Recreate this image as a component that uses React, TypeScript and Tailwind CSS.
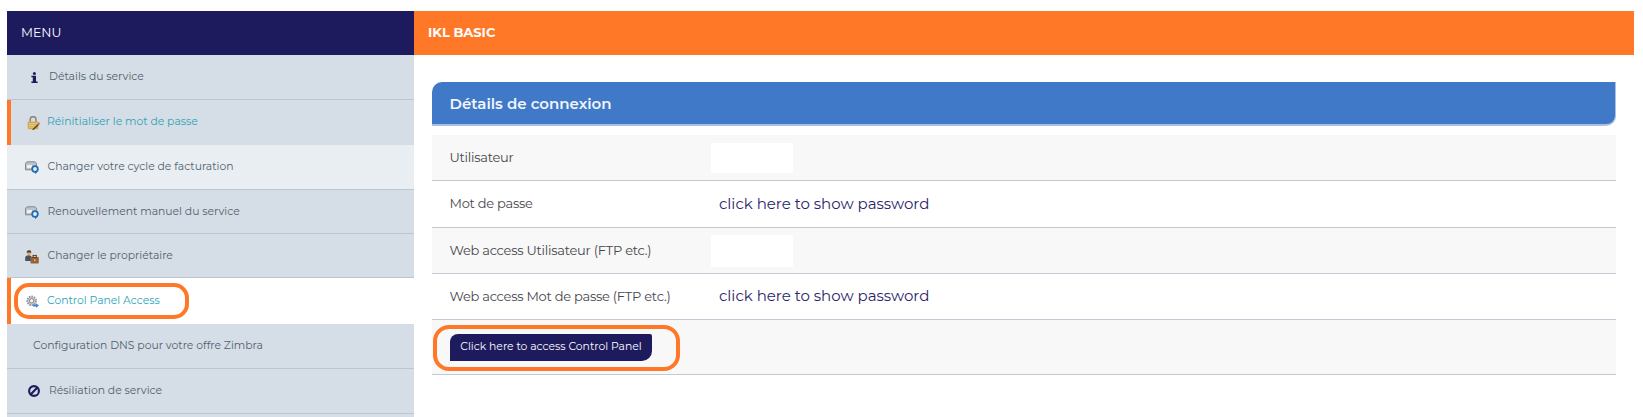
const font = "font-['Montserrat','Inter','Noto_Sans',sans-serif]";

function InfoIcon() {
  return (
    <svg width="7" height="11" viewBox="0 0 7 11" className="block">
      <circle cx="3.4" cy="1.5" r="1.5" fill="#1e1a5e" />
      <path d="M0.4 3.7h4.6v5.7h1.6V11H0.4V9.4h1.4V5.3H0.4z" fill="#1e1a5e" />
    </svg>
  );
}
function BanIcon() {
  return (
    <svg width="12" height="12" viewBox="0 0 12 12" className="block">
      <circle cx="6" cy="6" r="4.9" fill="none" stroke="#1e1a5e" strokeWidth="2.1" />
      <path d="M2.6 9.4 9.4 2.6" stroke="#1e1a5e" strokeWidth="2.1" />
    </svg>
  );
}
function LockIcon() {
  return (
    <svg width="13" height="14" viewBox="0 0 13 14" className="block">
      <path d="M3.2 6V3.6a2.9 2.9 0 0 1 5.8 0V6" fill="none" stroke="#8f8872" strokeWidth="1.5" />
      <rect x="0.7" y="5.6" width="10.6" height="7.6" rx="0.8" fill="#d2aa52" />
      <path d="M2 7.6h8.5M2 9.4h7M2 11.2h5" stroke="#ecd898" strokeWidth="0.7" />
      <path d="M5 13.6l6-5.5 1 1-5.5 4.8z" fill="#5e4520" />
      <circle cx="12" cy="7.6" r="1" fill="#e0566a" />
    </svg>
  );
}
function CycleIcon() {
  return (
    <svg width="14" height="13" viewBox="0 0 14 13" className="block">
      <path d="M0.5 3.2C0.5 1.6 1.5 0.8 3 0.8h6c1.5 0 2.5 .8 2.5 2.4V8.8H0.5z" fill="#c0c2c5" stroke="#84888c" />
      <rect x="2" y="4" width="5" height="3" fill="#eff0f1" />
      <circle cx="10" cy="8" r="2.8" fill="#eaf0f6" stroke="#1f6db8" strokeWidth="1.8" />
      <path d="M10 13v-3l2.2 1.5z" fill="#1f6db8" />
    </svg>
  );
}
function OwnerIcon() {
  return (
    <svg width="14" height="14" viewBox="0 0 14 14" className="block">
      <circle cx="4" cy="2.8" r="2.3" fill="#dca673" />
      <path d="M1.6 2.4a2.4 2.2 0 0 1 4.8 0z" fill="#5a3a20" />
      <path d="M0.2 11V8a3 2.6 0 0 1 6.6 0v3z" fill="#4a525b" />
      <rect x="5.5" y="7" width="8.3" height="6.5" rx="0.7" fill="#9a6230" />
      <rect x="8" y="5.4" width="3.3" height="2" fill="none" stroke="#5c3a1a" />
      <rect x="9" y="9.4" width="1.5" height="1.5" fill="#e8cc80" />
    </svg>
  );
}
function GearIcon() {
  return (
    <svg width="13" height="13" viewBox="0 0 13 13" className="block">
      <circle cx="5.6" cy="5.8" r="4.4" fill="#c9cbce" stroke="#94979b" strokeWidth="1.8" strokeDasharray="1.5 1" />
      <circle cx="5.6" cy="5.8" r="2.2" fill="#eef0f2" stroke="#85888c" />
      <path d="M7 9.6h3V8.2l3 2.3-3 2.3v-1.4H7z" fill="#3b86d0" />
    </svg>
  );
}

type Item = { label: string; icon?: React.ReactNode; cls: string; text?: string; pad?: string };

const items: Item[] = [
  { label: "Détails du service", icon: <InfoIcon />, cls: "h-[45px] bg-[#d5dde6] border-b border-[#bcc6d0] pl-[24px]", pad: "w-[18px]" },
  { label: "Réinitialiser le mot de passe", icon: <LockIcon />, cls: "h-[45px] bg-[#d5dde6] border-l-4 border-[#ff7828] pl-[16px]", text: "text-[#2ea3b8]", pad: "w-[20px]" },
  { label: "Changer votre cycle de facturation", icon: <CycleIcon />, cls: "h-[45px] bg-[#e9eef2] border-b border-[#bcc6d0] pl-[18px]", pad: "w-[22.5px]" },
  { label: "Renouvellement manuel du service", icon: <CycleIcon />, cls: "h-[44px] pt-[1px] bg-[#d5dde6] border-b border-[#bcc6d0] pl-[18px]", pad: "w-[22.5px]" },
  { label: "Changer le propriétaire", icon: <OwnerIcon />, cls: "h-[44px] pt-[2px] bg-[#d5dde6] border-b border-[#bcc6d0] pl-[18px]", pad: "w-[22.5px]" },
  { label: "Control Panel Access", icon: <GearIcon />, cls: "h-[46px] bg-white border-l-4 border-[#ff7828] pl-[15px]", text: "text-[#2ea3b8]", pad: "w-[21px]" },
  { label: "Configuration DNS pour votre offre Zimbra", cls: "h-[45px] bg-[#d5dde6] border-b border-[#bcc6d0] pl-[26px]" },
  { label: "Résiliation de service", icon: <BanIcon />, cls: "h-[45px] bg-[#d5dde6] border-b border-[#bcc6d0] pl-[21px]", pad: "w-[21px]" },
];

function Row({ label, cls, children }: { label: string; cls: string; children?: React.ReactNode }) {
  return (
    <div className={`flex items-center border-b border-[#c2cad3] ${cls}`}>
      <div className="w-[279px] shrink-0 pl-[17.5px] text-[13px] tracking-[-0.02em] text-[#47484d]">{label}</div>
      {children}
    </div>
  );
}

const Link = () => (
  <span className="ml-[8px] text-[15px] text-[#2a2468]">click here to show password</span>
);

export default function App() {
  return (
    <div className={`flex h-[417px] overflow-hidden bg-white pl-[7px] pr-[9px] pt-[11px] ${font}`}>
      <aside className="relative flex w-[407px] shrink-0 flex-col bg-[#d5dde6]">
        <div className="flex h-[44px] shrink-0 items-center bg-[#1e1a5e] pl-[14px] text-[12.5px] text-white">MENU</div>
        {items.map((it, i) => (
          <div key={i} className={`flex shrink-0 items-center text-[10.8px] ${it.cls} ${it.text ?? "text-[#52616e]"}`}>
            {it.icon && <span className={`flex shrink-0 ${it.pad}`}>{it.icon}</span>}
            <span>{it.label}</span>
          </div>
        ))}
        <div className="pointer-events-none absolute left-[7px] top-[272px] h-[36px] w-[175px] rounded-[15px] border-4 border-[#ff7828]" />
      </aside>
      <main className="min-w-0 flex-1">
        <div className="flex h-[44px] items-center bg-[#ff7828] pl-[14px] text-[13px] font-bold text-white">IKL BASIC</div>
        <div className="px-[18px] pt-[27px]">
          <div className="flex h-[44px] items-center rounded-tl-[10px] rounded-br-[10px] border-b-2 border-r border-[#a9c0e4] bg-[#4179c9] pl-[17.5px] pt-[2px] text-[15px] font-semibold text-[#f2f5fb]">
            Détails de connexion
          </div>
          <div className="mt-[9px]">
            <Row label="Utilisateur" cls="h-[46px] bg-[#f8f8f8]">
              <div className="h-[30px] w-[82px] bg-white" />
            </Row>
            <Row label="Mot de passe" cls="h-[47px] bg-white"><Link /></Row>
            <Row label="Web access Utilisateur (FTP etc.)" cls="h-[46px] bg-[#f8f8f8]">
              <div className="h-[32px] w-[82px] bg-white" />
            </Row>
            <Row label="Web access Mot de passe (FTP etc.)" cls="h-[46px] bg-white"><Link /></Row>
            <div className="relative flex h-[55px] items-start border-b border-[#c2cad3] bg-[#f8f8f8] pl-[18px] pt-[14px]">
              <button className="flex h-[27px] w-[202px] items-center justify-center whitespace-nowrap rounded-tl-[8px] rounded-tr-[2px] rounded-br-[10px] bg-[#1e1a5e] text-[10.8px] text-white">
                Click here to access Control Panel
              </button>
              <div className="pointer-events-none absolute left-[1px] top-[5px] h-[46px] w-[247px] rounded-[16px] border-4 border-[#ff7828]" />
            </div>
          </div>
        </div>
      </main>
    </div>
  );
}
